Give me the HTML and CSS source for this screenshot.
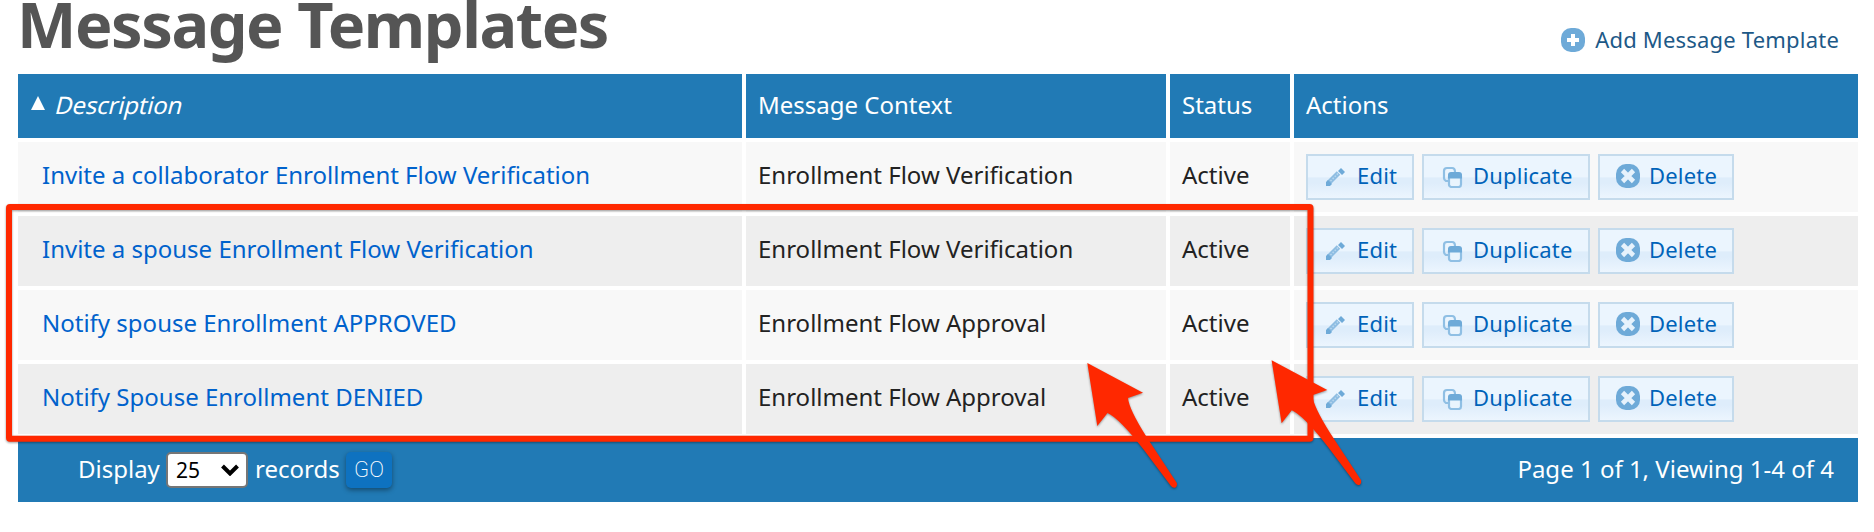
FILE: index.html
```html
<!DOCTYPE html>
<html lang="en">
<head>
<meta charset="utf-8">
<title>Message Templates</title>
<link rel="stylesheet" href="styles.css">
</head>
<body>
<svg class="sprites" aria-hidden="true">
  <symbol id="i-add" viewBox="0 0 24 24"><rect width="24" height="24" rx="10" fill="#6eaad8"/><path fill="#fff" d="M10 6h4v4h4v4h-4v4h-4v-4H6v-4h4z"/></symbol>
  <symbol id="i-del" viewBox="0 0 24 24"><rect width="24" height="24" rx="10" fill="#6eaad8"/><path stroke="#e6f2fc" stroke-width="4.600" d="M6.500 6.500l11 11M17.500 6.500l-11 11"/></symbol>
  <symbol id="i-edit" viewBox="0 0 24 24"><path stroke="#8ebde2" stroke-width="5" d="M5 18.500L14.500 9"/><path fill="#6eaad8" d="M2 22v-4l2-2 4 4-2 2zM14 7l3-3 4 4-3 3z"/><path stroke="#b8d7ef" stroke-width="1.500" stroke-dasharray="1.500 1.500" d="M6.500 17L14 9.500"/></symbol>
  <symbol id="i-dup" viewBox="0 0 24 24"><path fill="none" stroke="#8fbfe4" stroke-width="2.200" d="M8 17H6q-2-1-2-3V7q0-3 3-3h5q3 0 3 4"/><rect x="9" y="10" width="12" height="13" rx="2.500" fill="#e9f4fd" stroke="#8fbfe4" stroke-width="2.200"/><path fill="#6eaad8" d="M8 14.500V11q0-3 3-3h8q3 0 3 3v3.500z"/></symbol>
</svg>
<header class="top">
  <h1>Message Templates</h1>
  <a class="add"><svg><use href="#i-add"/></svg><span>Add Message Template</span></a>
</header>
<main class="grid">
  <div class="row head"><div class="sorted"><svg class="tri" viewBox="0 0 14 14"><path fill="#fff" d="M7 0l7 14H0z"/></svg><span class="slant">Description</span></div><div>Message Context</div><div>Status</div><div>Actions</div></div>
  <div class="row"><div class="desc">Invite a collaborator Enrollment Flow Verification</div><div>Enrollment Flow Verification</div><div>Active</div><div class="actions"><a class="btn edit"><svg><use href="#i-edit"/></svg>Edit</a><a class="btn dup"><svg><use href="#i-dup"/></svg>Duplicate</a><a class="btn del"><svg><use href="#i-del"/></svg>Delete</a></div></div>
  <div class="row alt"><div class="desc">Invite a spouse Enrollment Flow Verification</div><div>Enrollment Flow Verification</div><div>Active</div><div class="actions"><a class="btn edit"><svg><use href="#i-edit"/></svg>Edit</a><a class="btn dup"><svg><use href="#i-dup"/></svg>Duplicate</a><a class="btn del"><svg><use href="#i-del"/></svg>Delete</a></div></div>
  <div class="row"><div class="desc">Notify spouse Enrollment APPROVED</div><div>Enrollment Flow Approval</div><div>Active</div><div class="actions"><a class="btn edit"><svg><use href="#i-edit"/></svg>Edit</a><a class="btn dup"><svg><use href="#i-dup"/></svg>Duplicate</a><a class="btn del"><svg><use href="#i-del"/></svg>Delete</a></div></div>
  <div class="row alt"><div class="desc">Notify Spouse Enrollment DENIED</div><div>Enrollment Flow Approval</div><div>Active</div><div class="actions"><a class="btn edit"><svg><use href="#i-edit"/></svg>Edit</a><a class="btn dup"><svg><use href="#i-dup"/></svg>Duplicate</a><a class="btn del"><svg><use href="#i-del"/></svg>Delete</a></div></div>
  <div class="foot">
    <span class="display">Display</span>
    <span class="select">25<svg viewBox="0 0 18 12"><path fill="none" stroke="#000" stroke-width="4" d="M1.500 2L9 9.500 16.500 2"/></svg></span>
    <span class="records">records</span>
    <span class="go">GO</span>
    <span class="pages">Page 1 of 1, Viewing 1-4 of 4</span>
  </div>
</main>
<svg class="marks" viewBox="0 0 1874 532">
  <defs><path id="arrow" d="M1087.300 363L1143 392.700 1128 398Q1129 409 1146 436L1176.800 483Q1177.500 486 1175.500 487.500 1173 488.500 1171 486L1144 450Q1119 418 1107.500 413L1097.300 426z"/></defs>
  <rect x="9" y="207" width="1301.500" height="231.700" rx="1"/>
  <use href="#arrow"/>
  <use href="#arrow" x="184.300" y="-2.800"/>
</svg>
</body>
</html>
```

FILE: styles.css
```css
body { margin: 0; width: 1874px; height: 532px; overflow: hidden; background: #fff; color: #222; font: 24px/32px "Noto Sans", sans-serif; }
.sprites { display: none; }
.top { display: flex; justify-content: space-between; height: 74px; padding: 0 35px 0 17px; }
h1 { margin: 0; font-size: 63px; line-height: 48px; letter-spacing: -1.45px; color: #555; white-space: nowrap; }
.add { display: flex; align-items: center; gap: 10px; height: 32px; margin-top: 24px; color: #1d5987; font-size: 22px; letter-spacing: .2px; white-space: nowrap; }
.add span { margin-bottom: 2px; }
.add svg, .btn svg { width: 24px; height: 24px; flex: none; }
.grid { display: grid; gap: 4px; margin: 0 16px 0 18px; }
.row { display: grid; grid-template-columns: 724px 420px 120px 564px; gap: 4px; height: 70px; }
.row > div { display: flex; align-items: center; padding: 0 12px 4px; background: #f8f8f8; white-space: nowrap; box-sizing: border-box; }
.row.alt > div { background: #eee; }
.row.head { height: 64px; }
.row.head > div { padding-bottom: 2px; background: #217ab5; color: #fff; }
.row > .desc { padding-left: 24px; color: #0062cc; }
.tri { width: 14px; height: 14px; margin: -5px 11px 0 1px; }
.slant { transform: skewX(-14deg); letter-spacing: -.2px; }
.row > .actions { gap: 8px; padding-bottom: 0; }
.btn { display: flex; align-items: center; box-sizing: border-box; height: 46px; padding: 0 0 4px 16px; border: 2px solid #c5dbec; background: linear-gradient(#ebf5fe 0 50%, #deedfb 52% 64%, #ecf5fe); color: #0063b9; font-size: 22px; letter-spacing: .2px; gap: 9px; }
.btn svg { margin-top: 2px; }
.edit { width: 108px; }
.dup { width: 168px; }
.del { width: 136px; }
.foot { display: flex; align-items: center; height: 64px; padding: 0 24px 0 60px; box-sizing: border-box; background: #217ab5; color: #fff; white-space: nowrap; }
.display { width: 88px; margin-bottom: 2px; }
.select { display: flex; align-items: center; justify-content: space-between; box-sizing: border-box; width: 82px; height: 36px; padding: 0 7px 0 8px; border: 2px solid #767676; border-radius: 5px; background: #fff; color: #000; font-size: 21px; }
.select svg { width: 18px; height: 12px; }
.records { width: 91px; margin: 0 0 2px 7px; }
.go { width: 46px; height: 36px; border-radius: 5px; background: #0e72c0; box-shadow: 0 2px 5px rgba(0, 0, 0, .4); font: 200 22px/36px Roboto, sans-serif; text-align: center; }
.pages { margin: 0 0 2px auto; }
.marks { position: absolute; left: 0; top: 0; width: 1874px; height: 532px; filter: drop-shadow(0 1px 1px rgba(0, 0, 0, .4)); }
.marks rect { fill: none; stroke: #ff2800; stroke-width: 6; stroke-linejoin: round; }
.marks use { fill: #ff2800; }
```
